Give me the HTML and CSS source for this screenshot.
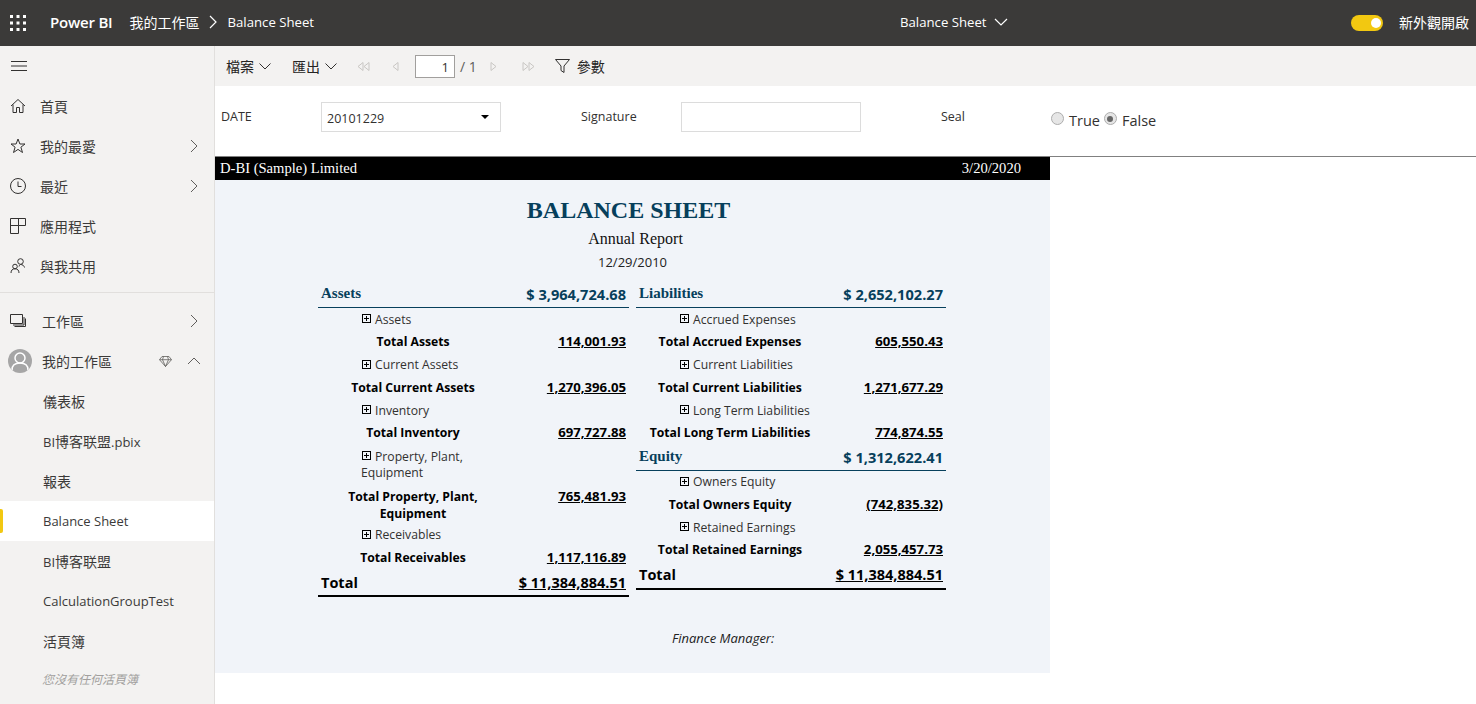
FILE: index.html
```html
<!DOCTYPE html>
<html lang="zh-Hant">
<head>
<meta charset="utf-8">
<title>Balance Sheet</title>
<link rel="stylesheet" href="styles.css">
</head>
<body>
<header class="topbar">
  <svg class="waffle" width="18" height="18" viewBox="0 0 18 18"><g fill="#fff"><rect x="1" y="1" width="3" height="3"/><rect x="7.5" y="1" width="3" height="3"/><rect x="14" y="1" width="3" height="3"/><rect x="1" y="7.5" width="3" height="3"/><rect x="7.5" y="7.5" width="3" height="3"/><rect x="14" y="7.5" width="3" height="3"/><rect x="1" y="14" width="3" height="3"/><rect x="7.5" y="14" width="3" height="3"/><rect x="14" y="14" width="3" height="3"/></g></svg>
  <span class="brand">Power BI</span>
  <span class="crumb crumb-cjk">我的工作區</span>
  <svg class="crumb-sep" width="10" height="14" viewBox="0 0 10 14"><path d="M2 1l6 6-6 6" fill="none" stroke="#fff" stroke-width="1.2"/></svg>
  <span class="crumb">Balance Sheet</span>
  <div class="top-center">
    <span>Balance Sheet</span>
    <svg width="14" height="8" viewBox="0 0 14 8"><path d="M1 1l6 6 6-6" fill="none" stroke="#fff" stroke-width="1.2"/></svg>
  </div>
  <div class="top-right">
    <span class="toggle"><span class="knob"></span></span>
    <span class="crumb crumb-cjk">新外觀開啟</span>
  </div>
</header>
<div class="shell">
  <nav class="sidebar">
    <div class="nav-burger">
      <svg width="16" height="12" viewBox="0 0 16 12"><path d="M0 1.5h16M0 6h16M0 10.500h16" stroke="#323130" stroke-width="1"/></svg>
    </div>
    <a class="nav-item"><svg class="ni" width="16" height="16" viewBox="0 0 16 16"><path d="M1 8l7-6.500L15 8M3 6.500V14.500h3.500V9.500h3v5H13V6.500" fill="none" stroke="#323130"/></svg><span class="cjk">首頁</span></a>
    <a class="nav-item"><svg class="ni" width="16" height="16" viewBox="0 0 16 16"><path d="M8 1l1.900 5H15l-4.100 3.200 1.600 5.300L8 11.400l-4.500 3.100 1.600-5.300L1 6h5.100z" fill="none" stroke="#323130"/></svg><span class="cjk">我的最愛</span><svg class="chev" width="8" height="14" viewBox="0 0 8 14"><path d="M1 1l6 6-6 6" fill="none" stroke="#605e5c"/></svg></a>
    <a class="nav-item"><svg class="ni" width="16" height="16" viewBox="0 0 16 16"><circle cx="8" cy="8" r="7.500" fill="none" stroke="#323130"/><path d="M8 3.500V8.500h3.500" fill="none" stroke="#323130"/></svg><span class="cjk">最近</span><svg class="chev" width="8" height="14" viewBox="0 0 8 14"><path d="M1 1l6 6-6 6" fill="none" stroke="#605e5c"/></svg></a>
    <a class="nav-item"><svg class="ni" width="16" height="16" viewBox="0 0 16 16"><path d="M.5.500h15v7h-7v8h-8zM.5 7.500h8M8.500.500v7" fill="none" stroke="#323130"/></svg><span class="cjk">應用程式</span></a>
    <a class="nav-item"><svg class="ni" width="16" height="16" viewBox="0 0 16 16"><circle cx="10.500" cy="3.500" r="2.800" fill="none" stroke="#323130"/><circle cx="5" cy="8.500" r="2.300" fill="none" stroke="#323130"/><path d="M1 15c0-2.800 1.500-4.200 4-4.200S9 12.200 9 15M9 8.500c.5-1.500 1.200-2 1.500-2 2 0 3.500 1 4 3" fill="none" stroke="#323130"/></svg><span class="cjk">與我共用</span></a>
    <hr class="nav-rule">
    <a class="nav-item nav-item-ws"><svg class="ni" width="16" height="16" viewBox="0 0 16 16"><path d="M.5 1.500h12v9H.5zM14 4v8H3M15.500 5.500v8h-11" fill="none" stroke="#323130"/></svg><span class="cjk">工作區</span><svg class="chev" width="8" height="14" viewBox="0 0 8 14"><path d="M1 1l6 6-6 6" fill="none" stroke="#605e5c"/></svg></a>
    <a class="nav-item nav-item-ws nav-my">
      <span class="avatar"><svg width="24" height="24" viewBox="0 0 24 24"><circle cx="12" cy="9" r="5" fill="none" stroke="#fff" stroke-width="1.500"/><path d="M4 21c0-4.500 3-7 8-7s8 2.500 8 7" fill="none" stroke="#fff" stroke-width="1.500"/></svg></span>
      <span class="cjk">我的工作區</span>
      <svg class="gem" width="13" height="11" viewBox="0 0 13 11"><path d="M3 .5h7l2.500 3.200L6.500 10.500.5 3.700zM.5 3.700h12M4.500.5l-1 3.200 3 6.800 3-6.800-1-3.200" fill="none" stroke="#605e5c" stroke-width=".8"/></svg>
      <svg class="chev-up" width="14" height="8" viewBox="0 0 14 8"><path d="M1 7l6-6 6 6" fill="none" stroke="#605e5c"/></svg>
    </a>
    <a class="nav-sub"><span class="cjk">儀表板</span></a>
    <a class="nav-sub"><span>BI<span class="cjk">博客联盟</span>.pbix</span></a>
    <a class="nav-sub"><span class="cjk">報表</span></a>
    <a class="nav-sub nav-active">Balance Sheet</a>
    <a class="nav-sub"><span>BI<span class="cjk">博客联盟</span></span></a>
    <a class="nav-sub">CalculationGroupTest</a>
    <a class="nav-sub"><span class="cjk">活頁簿</span></a>
    <a class="nav-empty">您沒有任何活頁簿</a>
  </nav>
  <main class="main">
    <div class="toolbar">
      <span class="tool">檔案<svg width="12" height="7" viewBox="0 0 12 7"><path d="M.5.500L6 6 11.500.500" fill="none" stroke="#323130"/></svg></span>
      <span class="tool">匯出<svg width="12" height="7" viewBox="0 0 12 7"><path d="M.5.500L6 6 11.500.500" fill="none" stroke="#323130"/></svg></span>
      <svg class="pg pg-first" width="13" height="9" viewBox="0 0 13 9"><path d="M6 .5L1 4.500 6 8.500zM12 .5L7 4.500l5 4z" fill="none" stroke="#c8c6c4"/></svg>
      <svg class="pg pg-prev" width="7" height="9" viewBox="0 0 7 9"><path d="M6 .5L1 4.500l5 4z" fill="none" stroke="#c8c6c4"/></svg>
      <span class="pagebox">1</span>
      <span class="pageof">/ 1</span>
      <svg class="pg pg-next" width="7" height="9" viewBox="0 0 7 9"><path d="M1 .5l5 4-5 4z" fill="none" stroke="#c8c6c4"/></svg>
      <svg class="pg pg-last" width="13" height="9" viewBox="0 0 13 9"><path d="M1 .5l5 4-5 4zM7 .5l5 4-5 4z" fill="none" stroke="#c8c6c4"/></svg>
      <svg class="funnel" width="15" height="14" viewBox="0 0 15 14"><path d="M.5.500h14L9 7v6.500L6 11.500V7z" fill="none" stroke="#323130"/></svg>
      <span class="tool-plain">參數</span>
    </div>
    <form class="params">
      <label class="p-label p-date">DATE</label>
      <span class="select">20101229<i class="caret"></i></span>
      <label class="p-label p-sig">Signature</label>
      <span class="textbox"></span>
      <label class="p-label p-seal">Seal</label>
      <span class="radio"></span><span class="radio-text">True</span>
      <span class="radio radio-on"></span><span class="radio-text">False</span>
    </form>
    <section class="report">
      <div class="report-bar"><span>D-BI (Sample) Limited</span><span>3/20/2020</span></div>
      <h1 class="r-title">BALANCE SHEET</h1>
      <div class="r-sub">Annual Report</div>
      <div class="r-date">12/29/2010</div>
      <div class="sheet">
        <div class="col">
          <div class="head"><span class="head-name">Assets</span><span class="head-amt">$ 3,964,724.68</span></div>
          <div class="row"><span class="detail"><i class="plus"></i>Assets</span></div>
          <div class="row"><b class="total">Total Assets</b><u class="amt">114,001.93</u></div>
          <div class="row"><span class="detail"><i class="plus"></i>Current Assets</span></div>
          <div class="row"><b class="total">Total Current Assets</b><u class="amt">1,270,396.05</u></div>
          <div class="row"><span class="detail"><i class="plus"></i>Inventory</span></div>
          <div class="row"><b class="total">Total Inventory</b><u class="amt">697,727.88</u></div>
          <div class="row row-2"><span class="detail"><i class="plus"></i>Property, Plant, Equipment</span></div>
          <div class="row row-2b"><b class="total">Total Property, Plant, Equipment</b><u class="amt">765,481.93</u></div>
          <div class="row"><span class="detail"><i class="plus"></i>Receivables</span></div>
          <div class="row"><b class="total">Total Receivables</b><u class="amt">1,117,116.89</u></div>
          <div class="grand"><span class="grand-name">Total</span><u class="grand-amt">$ 11,384,884.51</u></div>
        </div>
        <div class="col col-right">
          <div class="head"><span class="head-name">Liabilities</span><span class="head-amt">$ 2,652,102.27</span></div>
          <div class="row"><span class="detail"><i class="plus"></i>Accrued Expenses</span></div>
          <div class="row"><b class="total">Total Accrued Expenses</b><u class="amt">605,550.43</u></div>
          <div class="row"><span class="detail"><i class="plus"></i>Current Liabilities</span></div>
          <div class="row"><b class="total">Total Current Liabilities</b><u class="amt">1,271,677.29</u></div>
          <div class="row"><span class="detail"><i class="plus"></i>Long Term Liabilities</span></div>
          <div class="row"><b class="total">Total Long Term Liabilities</b><u class="amt">774,874.55</u></div>
          <div class="head head-next"><span class="head-name">Equity</span><span class="head-amt">$ 1,312,622.41</span></div>
          <div class="row"><span class="detail"><i class="plus"></i>Owners Equity</span></div>
          <div class="row"><b class="total">Total Owners Equity</b><u class="amt">(742,835.32)</u></div>
          <div class="row"><span class="detail"><i class="plus"></i>Retained Earnings</span></div>
          <div class="row"><b class="total">Total Retained Earnings</b><u class="amt">2,055,457.73</u></div>
          <div class="grand"><span class="grand-name">Total</span><u class="grand-amt">$ 11,384,884.51</u></div>
        </div>
      </div>
      <div class="r-foot">Finance Manager:</div>
    </section>
  </main>
</div>
</body>
</html>
```
FILE: styles.css
```css
* { box-sizing: border-box; }
html, body { margin: 0; height: 704px; overflow: hidden; background: #fff; }
body { font-family: "Open Sans", "Noto Sans CJK TC", sans-serif; color: #323130; font-size: 13px; }
svg { display: block; flex: none; }
.cjk { font-size: 14px; }

.topbar { height: 46px; background: #3b3a39; color: #fff; display: flex; align-items: center; padding: 0 0 2px 9px; position: relative; }
.waffle { margin-top: 2px; }
.brand { margin-left: 23px; font-weight: 600; font-size: 15px; letter-spacing: -.2px; }
.crumb { font-size: 13.200px; }
.crumb-cjk { font-size: 14px; margin-left: 17px; }
.crumb-sep { margin-left: 8px; margin-right: 10px; }
.top-center { position: absolute; left: 900px; top: 0; height: 44px; display: flex; align-items: center; gap: 7px; font-size: 13.200px; }
.top-right { margin-left: auto; display: flex; align-items: center; padding-right: 7px; }
.toggle { width: 32px; height: 16px; border-radius: 8px; background: #f2c811; position: relative; margin-top: 1px; margin-right: -1px; }
.knob { position: absolute; right: 2px; top: 3px; width: 10px; height: 10px; border-radius: 50%; background: #fff; }

.shell { display: flex; height: 658px; }
.sidebar { width: 215px; background: #f3f2f1; border-right: 1px solid #e1dfdd; flex: none; overflow: hidden; }
.nav-burger { height: 40px; display: flex; align-items: center; padding-left: 11px; }
.nav-item { height: 40px; display: flex; align-items: center; padding-left: 10px; padding-right: 16px; font-size: 13px; color: #3b3a39; }
.ni { margin-right: 14px; }
.chev { margin-left: auto; }
.nav-rule { border: 0; border-top: 1px solid #e1dfdd; margin: 6px 0 8px; }
.nav-item-ws .ni { margin-right: 16px; }
.nav-my { padding-left: 8px; padding-right: 13px; }
.avatar { width: 24px; height: 24px; border-radius: 50%; background: #a6a6a6; margin-right: 10px; flex: none; overflow: hidden; }
.gem { margin-left: auto; margin-right: 15px; }
.nav-sub { height: 40px; display: flex; align-items: center; padding-left: 43px; font-size: 13px; position: relative; color: #3b3a39; }
.nav-active { background: #fff; }
.nav-active::before { content: ""; position: absolute; left: 0; top: 8px; width: 3px; height: 24px; background: #f2c811; border-radius: 0 2px 2px 0; }
.nav-empty { height: 35px; display: flex; align-items: center; padding-left: 42px; font-size: 12px; font-style: italic; color: #a19f9d; }

.main { flex: 1; min-width: 0; }
.toolbar { height: 40px; background: #f3f2f1; display: flex; align-items: center; padding-left: 11px; }
.tool { display: flex; align-items: center; gap: 5px; font-size: 14px; color: #252423; margin-right: 21px; }
.tool-plain { font-size: 14px; color: #252423; margin-left: 7px; }
.pg-first { margin-left: -1px; }
.pg-prev { margin-left: 22px; }
.pagebox { margin-left: 16px; width: 40px; height: 23px; background: #fff; border: 1px solid #a19f9d; text-align: right; padding-right: 5px; font-size: 13px; line-height: 22px; }
.pageof { margin-left: 5px; font-size: 14px; color: #605e5c; }
.pg-next { margin-left: 13px; }
.pg-last { margin-left: 25px; }
.funnel { margin-left: 20px; }

.params { height: 71px; display: flex; align-items: center; padding: 0 0 9px 6px; border-bottom: 1px solid #808080; }
.p-label { font-size: 12.500px; width: 100px; }
.p-sig { margin-left: 80px; }
.p-seal { margin-left: 80px; width: 110px; }
.select, .textbox { width: 180px; height: 30px; background: #fff; border: 1px solid #dcdcdc; }
.select { display: flex; align-items: center; padding: 3px 11px 0 5px; font-size: 12.500px; justify-content: space-between; }
.caret { width: 0; height: 0; border-left: 4.500px solid transparent; border-right: 4.500px solid transparent; border-top: 4.500px solid #000; margin-top: -3px; }
.radio { width: 13px; height: 13px; border-radius: 50%; background: #e6e6e6; border: 1px solid #adadad; margin-right: 5px; margin-top: 4px; position: relative; }
.radio-on::after { content: ""; position: absolute; left: 2.500px; top: 2.500px; width: 6px; height: 6px; border-radius: 50%; background: #666; }
.radio-text { font-size: 14.500px; margin-right: 4px; margin-top: 7px; }

.report { width: 835px; height: 516px; background: #f1f4f9; display: flex; flex-direction: column; }
.report-bar { height: 23px; background: #000; color: #fff; display: flex; justify-content: space-between; align-items: center; padding: 0 29px 0 5px; font-family: "Liberation Serif", serif; font-size: 14.600px; }
.r-title { margin: 15px 8px 0 0; text-align: center; font-family: "Liberation Serif", serif; font-weight: 700; font-size: 24px; line-height: 30px; color: #073f5c; }
.r-sub { margin-left: 6px; text-align: center; font-family: "Liberation Serif", serif; font-size: 16px; line-height: 18px; margin-top: 5px; color: #111; }
.r-date { text-align: center; font-size: 13px; line-height: 16px; margin-top: 6px; color: #222; }
.sheet { display: flex; align-items: flex-start; padding-left: 103px; gap: 7px; margin-top: 11px; }
.col { width: 311px; }
.col-right { width: 310px; }
.head { height: 27px; flex: none; border-bottom: 1px solid #073f5c; display: flex; justify-content: space-between; align-items: flex-end; padding: 0 3px 3px; color: #073f5c; font-weight: 700; }
.head-next { height: 26px; }
.head-name { font-family: "Liberation Serif", serif; font-size: 15px; line-height: 20px; position: relative; top: -1px; }
.head-amt { font-size: 14.600px; line-height: 20px; }
.row { min-height: 22.750px; display: flex; align-items: center; justify-content: space-between; padding-right: 3px; font-size: 12.200px; line-height: 16px; }
.row-2 { height: 39px; }
.row-2b { height: 40px; align-items: flex-start; padding-top: 4px; line-height: 17px; }
.detail { margin-left: 43px; width: 125px; padding-top: 1px; color: #323130; }
.col-right .detail { width: 170px; }
.total { width: 146px; margin-left: 22px; text-align: center; color: #000; font-weight: 700; }
.col-right .total { width: 180px; margin-left: 4px; }
.amt { font-weight: 700; font-size: 13.200px; color: #000; margin-bottom: 2px; }
.plus { display: inline-block; width: 9px; height: 9px; margin: 0 4px 4px 1px; vertical-align: middle; border: 1px solid #000; background: linear-gradient(#000, #000) center / 5px 1px no-repeat, linear-gradient(#000, #000) center / 1px 5px no-repeat; }
.grand { height: 28px; border-bottom: 2px solid #000; display: flex; justify-content: space-between; align-items: center; padding: 0 3px; color: #000; font-weight: 700; font-size: 14.500px; }
.grand-name { font-size: 14.500px; }
.r-foot { margin-top: auto; margin-bottom: 27px; padding-left: 457px; font-style: italic; font-size: 13px; line-height: 16px; color: #222; }
```
